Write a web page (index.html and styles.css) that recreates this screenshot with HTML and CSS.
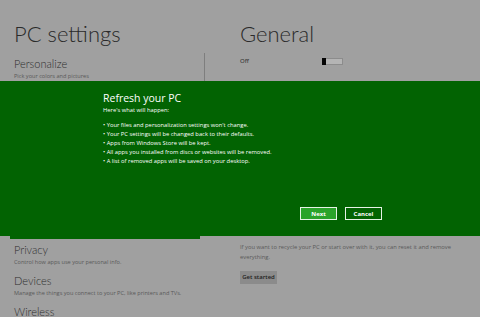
FILE: index.html
```html
<!DOCTYPE html>
<html lang="en">
<head>
    <meta charset="UTF-8">
    <title>PC settings</title>
    <link rel="stylesheet" href="styles.css">
</head>
<body>
<div class="page">
    <div class="nav">
        <h1 class="title">PC settings</h1>
        <div class="nav-list">
            <div class="nav-item">
                <span class="nav-name">Personalize</span>
                <span class="nav-desc">Pick your colors and pictures</span>
            </div>
            <div class="nav-item">
                <span class="nav-name">Users</span>
                <span class="nav-desc">Manage your account</span>
            </div>
            <div class="nav-item">
                <span class="nav-name">Notifications</span>
                <span class="nav-desc">Choose what apps can notify you</span>
            </div>
            <div class="nav-item">
                <span class="nav-name">Search</span>
                <span class="nav-desc">Choose what apps to search</span>
            </div>
            <div class="nav-item">
                <span class="nav-name">Share</span>
                <span class="nav-desc">Choose how to share</span>
            </div>
            <div class="nav-item selected">
                <span class="nav-name">General</span>
                <span class="nav-desc">Time, language, storage</span>
            </div>
            <div class="nav-item">
                <span class="nav-name">Privacy</span>
                <span class="nav-desc">Control how apps use your personal info.</span>
            </div>
            <div class="nav-item">
                <span class="nav-name">Devices</span>
                <span class="nav-desc">Manage the things you connect to your PC, like printers and TVs.</span>
            </div>
            <div class="nav-item">
                <span class="nav-name">Wireless</span>
                <span class="nav-desc">Turn wireless on or off</span>
            </div>
            <div class="scrollbar"></div>
        </div>
    </div>
    <div class="content">
        <h1 class="title">General</h1>
        <div class="setting">
            <span class="setting-value">Off</span>
            <span class="toggle"><span class="thumb"></span></span>
        </div>
        <div class="hidden-block"></div>
        <p class="reset-text">If you want to recycle your PC or start over with it, you can reset it and remove everything.</p>
        <button class="gray-button">Get started</button>
    </div>
</div>

<div class="dialog">
    <div class="dialog-body">
        <h2 class="dialog-title">Refresh your PC</h2>
        <p class="dialog-intro">Here's what will happen:</p>
        <ul class="dialog-list">
            <li>Your files and personalization settings won't change.</li>
            <li>Your PC settings will be changed back to their defaults.</li>
            <li>Apps from Windows Store will be kept.</li>
            <li>All apps you installed from discs or websites will be removed.</li>
            <li>A list of removed apps will be saved on your desktop.</li>
        </ul>
        <div class="dialog-buttons">
            <button class="dlg-button primary">Next</button>
            <button class="dlg-button">Cancel</button>
        </div>
    </div>
</div>
</body>
</html>
```

FILE: styles.css
```css
body {
    margin: 0;
    background: #a0a0a0;
    font-family: "Open Sans", Arial, sans-serif;
    color: #333;
    width: 480px;
    height: 317px;
    overflow: hidden;
    position: relative;
}
.page {
    display: flex;
}
.nav {
    width: 230px;
    padding-left: 10px;
}
.content {
    width: 220px;
    padding-left: 0;
}
.title {
    font-family: "Lato", "Open Sans", sans-serif;
    font-weight: 300;
    font-size: 22px;
    line-height: 28px;
    margin: 20px 0 0 4px;
    color: #2a2a2a;
}
.content .title {
    margin-left: 0;
}
.nav-list {
    position: relative;
    margin-top: 7px;
    width: 190px;
}
.nav-item {
    display: flex;
    flex-direction: column;
    height: 29px;
    box-sizing: border-box;
    padding: 1px 4px 3px;
    margin-bottom: 2px;
}
.nav-item.selected {
    background: #026302;
}
.nav-name {
    font-family: "Lato", "Open Sans", sans-serif;
    font-weight: 300;
    font-size: 11px;
    line-height: 16px;
    color: #2e2e2e;
}
.nav-desc {
    font-size: 5.6px;
    line-height: 9px;
    color: #595959;
    white-space: nowrap;
}
.scrollbar {
    position: absolute;
    left: 194px;
    top: -2px;
    width: 1px;
    height: 60px;
    background: #7e7e7e;
}
.setting {
    display: flex;
    align-items: center;
    margin-top: 9px;
    height: 8px;
}
.setting-value {
    font-size: 6px;
    color: #222;
    width: 82px;
}
.toggle {
    display: inline-block;
    width: 21px;
    height: 7px;
    background: #b4b4b4;
    border: 1px solid #8c8c8c;
    box-sizing: border-box;
    position: relative;
}
.thumb {
    position: absolute;
    left: -1px;
    top: -1px;
    width: 4px;
    height: 7px;
    background: #050505;
}
.hidden-block {
    height: 178px;
}
.reset-text {
    font-size: 5.8px;
    line-height: 9.5px;
    color: #5a5a5a;
    margin: 0;
    width: 220px;
}
.gray-button {
    margin-top: 7px;
    font-family: "Open Sans", Arial, sans-serif;
    font-size: 6px;
    font-weight: 600;
    color: #1e1e1e;
    background: #8b8b8b;
    border: none;
    width: 37px;
    height: 13px;
    padding: 0;
}
.dialog {
    position: absolute;
    left: 0;
    top: 81px;
    width: 480px;
    height: 155px;
    background: #026302;
    color: #fff;
}
.dialog-body {
    width: 280px;
    margin-left: 103px;
    display: flex;
    flex-direction: column;
}
.dialog-title {
    font-family: "Open Sans", Arial, sans-serif;
    font-weight: 400;
    font-size: 10.5px;
    line-height: 14px;
    margin: 10px 0 0;
}
.dialog-intro {
    font-size: 5.8px;
    line-height: 9px;
    margin: 1px 0 0;
}
.dialog-list {
    list-style: none;
    margin: 6px 0 0;
    padding: 0;
    font-size: 5.8px;
    line-height: 9.1px;
}
.dialog-list li::before {
    content: "\2022  ";
    white-space: pre;
}
.dialog-buttons {
    display: flex;
    justify-content: flex-end;
    gap: 8px;
    margin-top: 41px;
    padding-right: 1px;
}
.dlg-button {
    width: 37px;
    height: 13px;
    padding: 0;
    font-family: "Open Sans", Arial, sans-serif;
    font-size: 6px;
    font-weight: 700;
    color: #fff;
    background: #026302;
    border: 1px solid #e6f2e6;
}
.dlg-button.primary {
    background: #2aa32a;
}
```
